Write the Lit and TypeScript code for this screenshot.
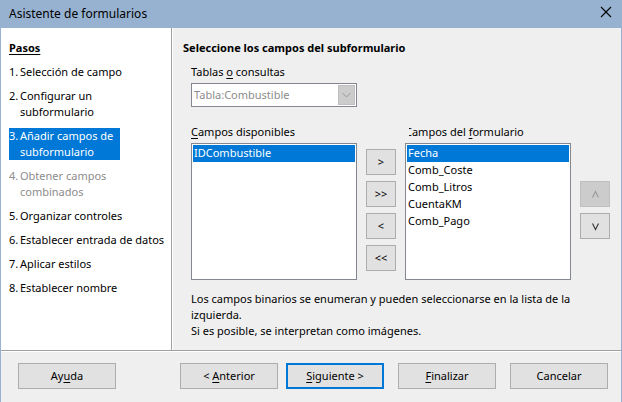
import { LitElement, html, css, nothing, type TemplateResult } from "lit";
import { customElement, state } from "lit/decorators.js";

interface Step {
  label: string;
  current?: boolean;
  disabled?: boolean;
}

const STEPS: Step[] = [
  { label: "Selección de campo" },
  { label: "Configurar un subformulario" },
  { label: "Añadir campos de subformulario", current: true },
  { label: "Obtener campos combinados", disabled: true },
  { label: "Organizar controles" },
  { label: "Establecer entrada de datos" },
  { label: "Aplicar estilos" },
  { label: "Establecer nombre" },
];

@customElement("app-root")
export class AppRoot extends LitElement {
  @state() private available = ["IDCombustible"];
  @state() private chosen = ["Fecha", "Comb_Coste", "Comb_Litros", "CuentaKM", "Comb_Pago"];

  static styles = css`
    :host {
      display: flex;
      flex-direction: column;
      box-sizing: border-box;
      min-height: 100vh;
      border: solid #97b2d1;
      border-width: 0 1px;
      background: #efefef;
      color: #000;
      font: 11px/16px "Noto Sans", "Open Sans", sans-serif;
    }
    *, *::before, *::after { box-sizing: border-box; }
    h1, h2, p, ol { margin: 0; padding: 0; font-size: inherit; }
    u { text-underline-offset: 2px; }
    button, select { font: inherit; color: inherit; border-radius: 0; margin: 0; }

    .titlebar {
      display: flex;
      align-items: center;
      justify-content: space-between;
      height: 28px;
      padding: 0 9px 0 8px;
      background: #97b2d1;
    }
    .titlebar h1 { font-weight: 400; font-size: 12px; }
    .close { display: flex; padding: 0; margin-bottom: 4px; border: 0; background: none; }
    .close svg { width: 12px; height: 12px; }

    .body { display: flex; flex: 1; }
    .steps {
      flex: 0 0 171px;
      padding: 12px 0 12px 8px;
      background: #fff;
      border-right: 1px solid #a0a0a0;
      box-shadow: 1px 0 #fff;
    }
    .steps h2 { text-decoration: underline; text-underline-offset: 2px; }
    .steps ol { display: flex; flex-direction: column; align-items: flex-start; gap: 8px; margin-top: 8px; list-style: none; }
    .step { display: flex; }
    .step .num { flex: 0 0 11px; white-space: nowrap; }
    .step.wrap .label { width: 100px; }
    .step.current { background: #0078d7; color: #fff; }
    .step.disabled { color: #8c8c8c; }

    .main { flex: 1; padding: 12px 11px 8px 11px; }
    .fields {
      display: grid;
      grid-template-columns: minmax(0, 1fr) 30px minmax(0, 1fr) 30px;
      column-gap: 9px;
      margin: 8px 0 0 8px;
    }
    .combo { grid-column: 1; display: grid; height: 24px; margin: 3px 0 17px; }
    .combo select, .combo .arrow { grid-area: 1 / 1; }
    .combo select {
      appearance: none;
      width: 100%;
      padding: 0 20px 0 2px;
      border: 1px solid #828790;
      background: #fff;
      color: #8c8c8c;
      opacity: 1;
    }
    .combo .arrow {
      justify-self: end;
      width: 17px;
      height: 20px;
      margin: 2px;
      border: 1px solid #bfbfbf;
      background: #ccc;
      pointer-events: none;
    }
    .wide { grid-column: 1 / -1; }
    .first { grid-column: 1; }
    .second { grid-column: 3; }
    .cut { display: inline-block; clip-path: inset(0 0 0 4px); }
    .list {
      width: 100%;
      height: 137px;
      margin-top: 3px;
      padding: 1px;
      border: 1px solid #828790;
      background: #fff;
      outline: none;
      overflow: auto;
    }
    .list option { min-height: 17px; padding: 0 1px; line-height: 17px; }
    .list option:checked {
      background: #0078d7 linear-gradient(#0078d7, #0078d7);
      color: #fff;
      -webkit-text-fill-color: #fff;
    }
    .stack { display: flex; flex-direction: column; justify-content: center; gap: 6px; }
    .push {
      height: 26px;
      padding: 0;
      border: 1px solid #adadad;
      background: #e1e1e1;
    }
    .push:disabled { background: #ccc; border-color: #bfbfbf; color: #8c8c8c; }
    .push.primary { border: 2px solid #0078d7; }
    .push svg { display: block; width: 9px; height: 9px; margin: 0 auto; }
    .note { margin: 11px 0 0 8px; }

    .footer {
      display: flex;
      gap: 14px;
      padding: 12px 13px 13px 17px;
      border-top: 1px solid #a0a0a0;
      box-shadow: inset 0 1px #fff;
    }
    .footer .push { flex: 0 1 98px; }
    .footer .help { margin-right: auto; }
    .nav { display: flex; gap: 8px; flex: 0 1 204px; }
  `;

  private stepRow(step: Step, i: number): TemplateResult {
    const wrap = i > 0 && i < 4;
    return html`<li
      class="step ${wrap ? "wrap" : ""} ${step.current ? "current" : ""} ${step.disabled ? "disabled" : ""}"
      aria-current=${step.current ? "step" : nothing}
    ><span class="num">${i + 1}.</span><span class="label">${step.label}</span></li>`;
  }

  private options(names: string[]) {
    return names.map((n, i) => html`<option ?selected=${i === 0}>${n}</option>`);
  }

  render() {
    return html`
      <header class="titlebar">
        <h1>Asistente de formularios</h1>
        <button class="close" aria-label="Cerrar">
          <svg viewBox="0 0 12 12" fill="none" stroke="#000" stroke-width="1.1"><path d="M1 1 11 11M11 1 1 11" /></svg>
        </button>
      </header>
      <div class="body">
        <nav class="steps">
          <h2>Pasos</h2>
          <ol>${STEPS.map((s, i) => this.stepRow(s, i))}</ol>
        </nav>
        <main class="main">
          <h2>Seleccione los campos del subformulario</h2>
          <div class="fields">
            <label class="wide" for="source">Tablas <u>o</u> consultas</label>
            <div class="combo">
              <select id="source" disabled><option>Tabla:Combustible</option></select>
              <svg class="arrow" viewBox="0 0 15 18" fill="none" stroke="#999" aria-hidden="true"><path d="M3.5 7 7.5 11 11.5 7" /></svg>
            </div>
            <label class="first" for="available"><u>C</u>ampos disponibles</label>
            <label class="second" for="chosen"><span class="cut">C</span>ampos del <u>f</u>ormulario</label>
            <select class="list first" id="available" size="8">${this.options(this.available)}</select>
            <div class="stack">
              <button class="push">&gt;</button>
              <button class="push">&gt;&gt;</button>
              <button class="push">&lt;</button>
              <button class="push">&lt;&lt;</button>
            </div>
            <select class="list" id="chosen" size="8">${this.options(this.chosen)}</select>
            <div class="stack">
              <button class="push" aria-label="Subir" disabled>
                <svg viewBox="0 0 9 9" fill="none" stroke="#999" stroke-width="1.1"><path d="M1.5 7.5 4.5 1.5 7.5 7.5" /></svg>
              </button>
              <button class="push" aria-label="Bajar">
                <svg viewBox="0 0 9 9" fill="none" stroke="#333" stroke-width="1.1"><path d="M1.5 1.5 4.5 7.5 7.5 1.5" /></svg>
              </button>
            </div>
          </div>
          <p class="note">
            Los campos binarios se enumeran y pueden seleccionarse en la lista de la izquierda.<br />
            Si es posible, se interpretan como imágenes.
          </p>
        </main>
      </div>
      <footer class="footer">
        <button class="push help">Ay<u>u</u>da</button>
        <div class="nav">
          <button class="push">&lt; <u>A</u>nterior</button>
          <button class="push primary"><u>S</u>iguiente &gt;</button>
        </div>
        <button class="push"><u>F</u>inalizar</button>
        <button class="push">Cancelar</button>
      </footer>
    `;
  }
}
